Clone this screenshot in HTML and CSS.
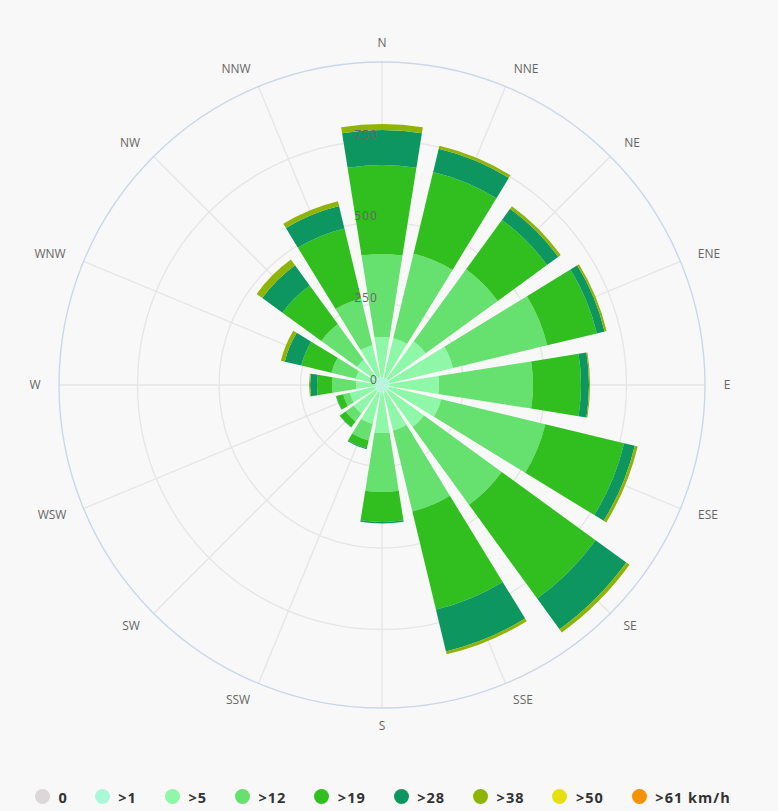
FILE: index.html
```html
<!DOCTYPE html>
<html lang="en">
<head>
<meta charset="utf-8">
<title>Wind rose</title>
<link rel="stylesheet" href="styles.css">
</head>
<body>
<main class="chart">
  <svg class="rose" id="rose" width="778" height="770" viewBox="0 0 778 770" xmlns="http://www.w3.org/2000/svg">
    <g id="grid"></g>
    <g id="sectors"></g>
    <g class="dir">
      <text x="382" y="47">N</text>
      <text x="526" y="73">NNE</text>
      <text x="632" y="147">NE</text>
      <text x="709" y="258">ENE</text>
      <text x="727" y="389">E</text>
      <text x="708" y="519">ESE</text>
      <text x="630" y="630">SE</text>
      <text x="523" y="704">SSE</text>
      <text x="382" y="730">S</text>
      <text x="238" y="704">SSW</text>
      <text x="131" y="630">SW</text>
      <text x="52" y="519">WSW</text>
      <text x="130" y="147">NW</text>
      <text x="50" y="258">WNW</text>
      <text x="35" y="389">W</text>
      <text x="236" y="73">NNW</text>
    </g>
    <g class="val">
      <text x="374" y="383.5">0</text>
      <text x="366" y="302">250</text>
      <text x="366" y="220">500</text>
      <text x="366" y="139">750</text>
    </g>
  </svg>
</main>
<ul class="legend">
  <li class="item"><span class="dot c0"></span>0</li>
  <li class="item"><span class="dot c1"></span>&gt;1</li>
  <li class="item"><span class="dot c5"></span>&gt;5</li>
  <li class="item"><span class="dot c12"></span>&gt;12</li>
  <li class="item"><span class="dot c19"></span>&gt;19</li>
  <li class="item"><span class="dot c28"></span>&gt;28</li>
  <li class="item"><span class="dot c38"></span>&gt;38</li>
  <li class="item"><span class="dot c50"></span>&gt;50</li>
  <li class="item"><span class="dot c61"></span>&gt;61 km/h</li>
</ul>
<script src="chart.js"></script>
</body>
</html>
```
FILE: styles.css
```css
html, body { margin: 0; padding: 0; background: #f8f8f8; }
body { width: 778px; height: 811px; overflow: hidden; font-family: "Open Sans", sans-serif; }
.chart { height: 770px; }
.rose { display: block; }
.ring { fill: none; stroke: #e6e6e6; stroke-width: 1.4; }
.ring-outer { fill: none; stroke: #ccd6eb; stroke-width: 1.4; }
.spoke { stroke: #e6e6e6; stroke-width: 1.4; }
.dir text { font-family: "Open Sans", sans-serif; font-size: 12px; fill: #666666; text-anchor: middle; }
.val text { font-family: "Open Sans", sans-serif; font-size: 12px; fill: #666666; text-anchor: middle; letter-spacing: 1px; }
.legend { list-style: none; margin: 0; padding: 17px 0 0 35px; display: flex; align-items: center; height: 22px; }
.item { display: flex; align-items: center; font-family: "Open Sans", sans-serif; font-weight: 700; font-size: 14.5px; line-height: 20px; color: #333333; letter-spacing: 1px; margin-right: 28px; }
.item:first-child { margin-right: 27px; }
.dot { flex: none; width: 15px; height: 15px; border-radius: 50%; margin: -3px 8.5px 0 0; display: block; }
.c0 { background: #dcd7d9; }
.c1 { background: #aaf8d8; }
.c5 { background: #8ff8a8; }
.c12 { background: #66e06e; }
.c19 { background: #31bf1f; }
.c28 { background: #0e9660; }
.c38 { background: #8fb405; }
.c50 { background: #e6e010; }
.c61 { background: #f59105; }
```
FILE: chart.js
```js
var CX = 382, CY = 385, NS = "http://www.w3.org/2000/svg";
var COLORS = ["#aaf8d8", "#8ff8a8", "#66e06e", "#31bf1f", "#0e9660", "#8fb405"];
// Outer radius of every speed band, clockwise from N.
var DATA = [
  [8, 48, 131, 220, 255, 261],
  [8, 48, 135, 219, 243, 246],
  [8, 54, 143, 204, 218, 221],
  [8, 73, 170, 221, 229, 231],
  [8, 57, 151, 199, 207, 208],
  [8, 61, 168, 249, 260, 263],
  [8, 52, 148, 264, 302, 306],
  [8, 47, 130, 231, 274, 277],
  [8, 48, 107, 137, 138.5, 138.5],
  [8, 40, 57, 65, 66, 66],
  [8, 35, 45, 52, 52.5, 52.5],
  [8, 33, 40, 47, 47.5, 47.5],
  [8, 26, 50, 65, 72, 73],
  [8, 27, 52, 83, 100, 104],
  [8, 31, 75, 123, 148, 155],
  [8, 41, 89, 161, 184, 189]
];
function el(name, attrs, parent) {
  var e = document.createElementNS(NS, name);
  for (var k in attrs) e.setAttribute(k, attrs[k]);
  parent.appendChild(e);
  return e;
}
function pt(r, deg) {
  var a = deg * Math.PI / 180;
  return (CX + r * Math.sin(a)).toFixed(2) + " " + (CY - r * Math.cos(a)).toFixed(2);
}
var grid = document.getElementById("grid");
[81.5, 163, 244.5].forEach(function (r) {
  el("circle", { cx: CX, cy: CY, r: r, "class": "ring" }, grid);
});
for (var i = 0; i < 16; i++) {
  var p = pt(323, i * 22.5).split(" ");
  el("line", { x1: CX, y1: CY, x2: p[0], y2: p[1], "class": "spoke" }, grid);
}
el("circle", { cx: CX, cy: CY, r: 323, "class": "ring-outer" }, grid);
var sectors = document.getElementById("sectors"), HALF = 9;
DATA.forEach(function (bands, i) {
  var mid = i * 22.5, a0 = mid - HALF, a1 = mid + HALF, inner = 0;
  bands.forEach(function (r, b) {
    if (r > inner) {
      var d = "M" + pt(r, a0) + " A" + r + " " + r + " 0 0 1 " + pt(r, a1) +
        " L" + pt(inner, a1) + (inner ? " A" + inner + " " + inner + " 0 0 0 " + pt(inner, a0) : "") + " Z";
      el("path", { d: d, fill: COLORS[b] }, sectors);
    }
    inner = r;
  });
});
```
